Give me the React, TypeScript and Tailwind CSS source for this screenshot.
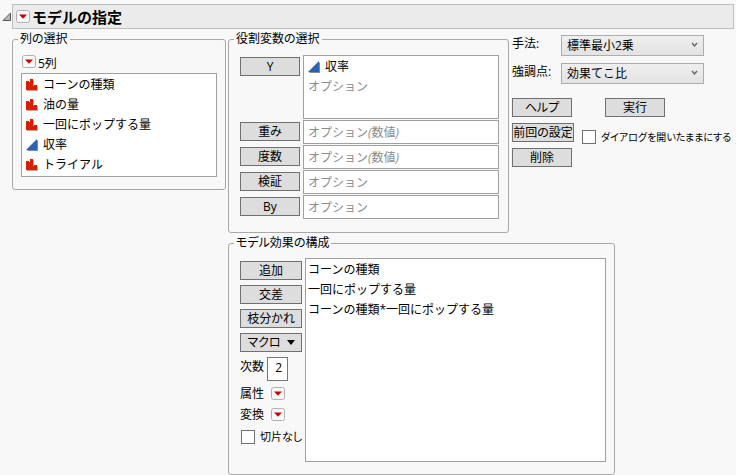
import type { ReactNode } from 'react';

type Kind = 'nominal' | 'continuous';

const columns: { name: string; kind: Kind }[] = [
  { name: 'コーンの種類', kind: 'nominal' },
  { name: '油の量', kind: 'nominal' },
  { name: '一回にポップする量', kind: 'nominal' },
  { name: '収率', kind: 'continuous' },
  { name: 'トライアル', kind: 'nominal' },
];

const roles = [
  { label: '重み', hint: 'オプション(数値)' },
  { label: '度数', hint: 'オプション(数値)' },
  { label: '検証', hint: 'オプション' },
  { label: 'By', hint: 'オプション' },
];

const effects = ['コーンの種類', '一回にポップする量', 'コーンの種類*一回にポップする量'];

export default function App() {
  return (
    <div className="min-h-screen bg-[#f8f8f8] pt-1 font-['Open_Sans','Noto_Sans_CJK_JP',sans-serif] text-xs text-black">
      <header className="flex items-center pl-0.5 pr-0.5">
        <button type="button" aria-label="折りたたむ" className="w-2.5 shrink-0">
          <svg width="10" height="10" viewBox="0 0 10 10">
            <path d="M8.5 1v7.5H1z" fill="#b8b8b8" stroke="#555" />
          </svg>
        </button>
        <div className="flex h-[25px] flex-1 items-center gap-0.5 border border-[#bdbdbd] bg-[#ebebeb] pl-[3px]">
          <RedTriangle label="モデルの指定 メニュー" />
          <h1 className="text-[15px] leading-5 font-bold">モデルの指定</h1>
        </div>
      </header>

      <main className="mt-0.5 grid grid-cols-[214px_281px_minmax(0,1fr)] items-start gap-x-0.5 gap-y-0.5 pl-3">
        <Group title="列の選択">
          <div className="px-2 pt-2 pb-3">
            <div className="flex h-[18px] items-start gap-0.5 pl-px">
              <RedTriangle label="列 メニュー" />
              <span className="leading-[18px]">5列</span>
            </div>
            <ul className="border border-[#a0a0a0] bg-white py-px pl-1">
              {columns.map((c) => (
                <ColumnItem key={c.name} name={c.name} kind={c.kind} />
              ))}
            </ul>
          </div>
        </Group>

        <Group title="役割変数の選択">
          <div className="flex flex-col gap-px pt-2 pr-[9px] pb-[13px] pl-[11px]">
            <div className="flex items-start gap-[3px]">
              <div className="w-[60px] pt-0.5">
                <PushButton>Y</PushButton>
              </div>
              <div className="h-16 flex-1 border border-[#a0a0a0] bg-white pt-px pl-1">
                <ul>
                  <ColumnItem name="収率" kind="continuous" />
                </ul>
                <p className="leading-5 text-[#8c8c8c] italic [font-synthesis:none]">オプション</p>
              </div>
            </div>
            {roles.map((r) => (
              <div key={r.label} className="flex items-start gap-[3px]">
                <div className="w-[60px] pt-0.5">
                  <PushButton>{r.label}</PushButton>
                </div>
                <input
                  type="text"
                  aria-label={r.label}
                  placeholder={r.hint}
                  className="h-6 min-w-0 flex-1 border border-[#a0a0a0] bg-white px-1 [font-synthesis:none] placeholder:text-[#8c8c8c] placeholder:italic"
                />
              </div>
            ))}
          </div>
        </Group>

        <section className="pt-1 pl-px">
          <div className="flex flex-col gap-[7px]">
            <Choice id="method" label="手法:" value="標準最小2乗" />
            <Choice id="emphasis" label="強調点:" value="効果てこ比" />
          </div>
          <div className="mt-3.5 flex gap-[33px]">
            <div className="w-[60px]">
              <PushButton>ヘルプ</PushButton>
            </div>
            <div className="w-[60px]">
              <PushButton>実行</PushButton>
            </div>
          </div>
          <div className="mt-1.5 flex h-[19px] items-start gap-2">
            <div className="w-[62px] shrink-0">
              <PushButton>前回の設定</PushButton>
            </div>
            <div className="pt-1.5 text-[10px]">
              <Check id="keep-open" label="ダイアログを開いたままにする" />
            </div>
          </div>
          <div className="mt-1.5 w-[60px]">
            <PushButton>削除</PushButton>
          </div>
        </section>

        <div className="col-span-2 col-start-2 w-[387px]">
          <Group title="モデル効果の構成">
            <div className="flex gap-[3px] pt-[7px] pr-2 pb-3 pl-[11px]">
              <div className="flex w-[62px] shrink-0 flex-col pt-[3px]">
                <div className="flex flex-col gap-[5px]">
                  <PushButton>追加</PushButton>
                  <PushButton>交差</PushButton>
                  <PushButton>枝分かれ</PushButton>
                  <PushButton>
                    マクロ
                    <svg width="8" height="5" viewBox="0 0 8 5">
                      <path d="M0 0h8L4 5z" fill="#000" />
                    </svg>
                  </PushButton>
                </div>
                <div className="mt-[5px] flex gap-[3px]">
                  <label htmlFor="degree" className="leading-5">次数</label>
                  <input
                    id="degree"
                    type="text"
                    defaultValue="2"
                    className="h-6 w-[21px] border border-[#777] bg-white pr-[5px] pb-1 text-right"
                  />
                </div>
                <div className="mt-0.5 flex h-[21px] items-center gap-[7px]">
                  <span>属性</span>
                  <RedTriangle label="属性" />
                </div>
                <div className="flex h-[21px] items-center gap-[7px]">
                  <span>変換</span>
                  <RedTriangle label="変換" />
                </div>
                <div className="mt-1 pl-px text-[11px]">
                  <Check id="no-intercept" label="切片なし" />
                </div>
              </div>
              <ul className="h-[204px] flex-1 border border-[#a0a0a0] bg-white pt-px pl-0.5">
                {effects.map((e) => (
                  <li key={e} className="leading-5">{e}</li>
                ))}
              </ul>
            </div>
          </Group>
        </div>
      </main>
    </div>
  );
}

function Group({ title, children }: { title: string; children: ReactNode }) {
  return (
    <fieldset className="min-w-0 rounded-[3px] border border-[#a8a8a8]">
      <legend className="ml-[5px] px-0.5 leading-4 [font-feature-settings:'palt']">{title}</legend>
      {children}
    </fieldset>
  );
}

function PushButton({ children }: { children: ReactNode }) {
  return (
    <button
      type="button"
      className="flex h-[19px] w-full items-center justify-center gap-1.5 border border-[#707070] bg-[#dddddd] leading-4 whitespace-nowrap [font-feature-settings:'palt']"
    >
      {children}
    </button>
  );
}

function Choice({ id, label, value }: { id: string; label: string; value: string }) {
  return (
    <div className="flex items-start">
      <label htmlFor={id} className="w-[49px] leading-[18px]">{label}</label>
      <div className="relative w-[143px]">
        <select
          id={id}
          className="block h-[21px] w-full appearance-none border border-[#adadad] bg-linear-to-b from-[#efefef] to-[#e3e3e3] pl-[5px] leading-4"
        >
          <option>{value}</option>
        </select>
        <svg className="pointer-events-none absolute top-[7px] right-1.5" width="7" height="6" viewBox="0 0 7 6">
          <path d="M1 1l2.5 3L6 1" fill="none" stroke="#606060" strokeWidth="1.3" />
        </svg>
      </div>
    </div>
  );
}

function Check({ id, label }: { id: string; label: string }) {
  return (
    <div className="flex items-center gap-[5px]">
      <input
        id={id}
        type="checkbox"
        className="size-3.5 shrink-0 appearance-none border border-[#707070] bg-white checked:bg-[#707070]"
      />
      <label htmlFor={id} className="leading-4 whitespace-nowrap [font-feature-settings:'palt']">{label}</label>
    </div>
  );
}

function ColumnItem({ name, kind }: { name: string; kind: Kind }) {
  return (
    <li className="flex h-5 items-center gap-[5px]">
      {kind === 'nominal' ? <NominalIcon /> : <ContinuousIcon />}
      <span className="leading-5">{name}</span>
    </li>
  );
}

function RedTriangle({ label }: { label: string }) {
  return (
    <button type="button" aria-label={label} className="shrink-0">
      <svg width="14" height="13" viewBox="0 0 14 13" className="block">
        <rect x="0.5" y="0.5" width="13" height="12" rx="2" fill="#f8f8f8" stroke="#b0b0b0" />
        <path d="M3 4.5h8L7 8.8z" fill="#c80000" />
      </svg>
    </button>
  );
}

function NominalIcon() {
  return (
    <svg width="12" height="12" viewBox="0 0 12 12" className="shrink-0">
      <path d="M1 3h3V1h4v6h4v5H1z" fill="#b5aaa8" />
      <path d="M0 2h3v9H0zM4 0h3v11H4zM8 6h3v5H8z" fill="#d42000" />
      <path d="M3 3h1v8H3zM7 7h1v4H7z" fill="#a83420" />
    </svg>
  );
}

function ContinuousIcon() {
  return (
    <svg width="12" height="12" viewBox="0 0 12 12" className="shrink-0">
      <path d="M12 1v11H1z" fill="#8a8a8a" />
      <path d="M11 0v11H0z" fill="#2b62b4" />
    </svg>
  );
}
